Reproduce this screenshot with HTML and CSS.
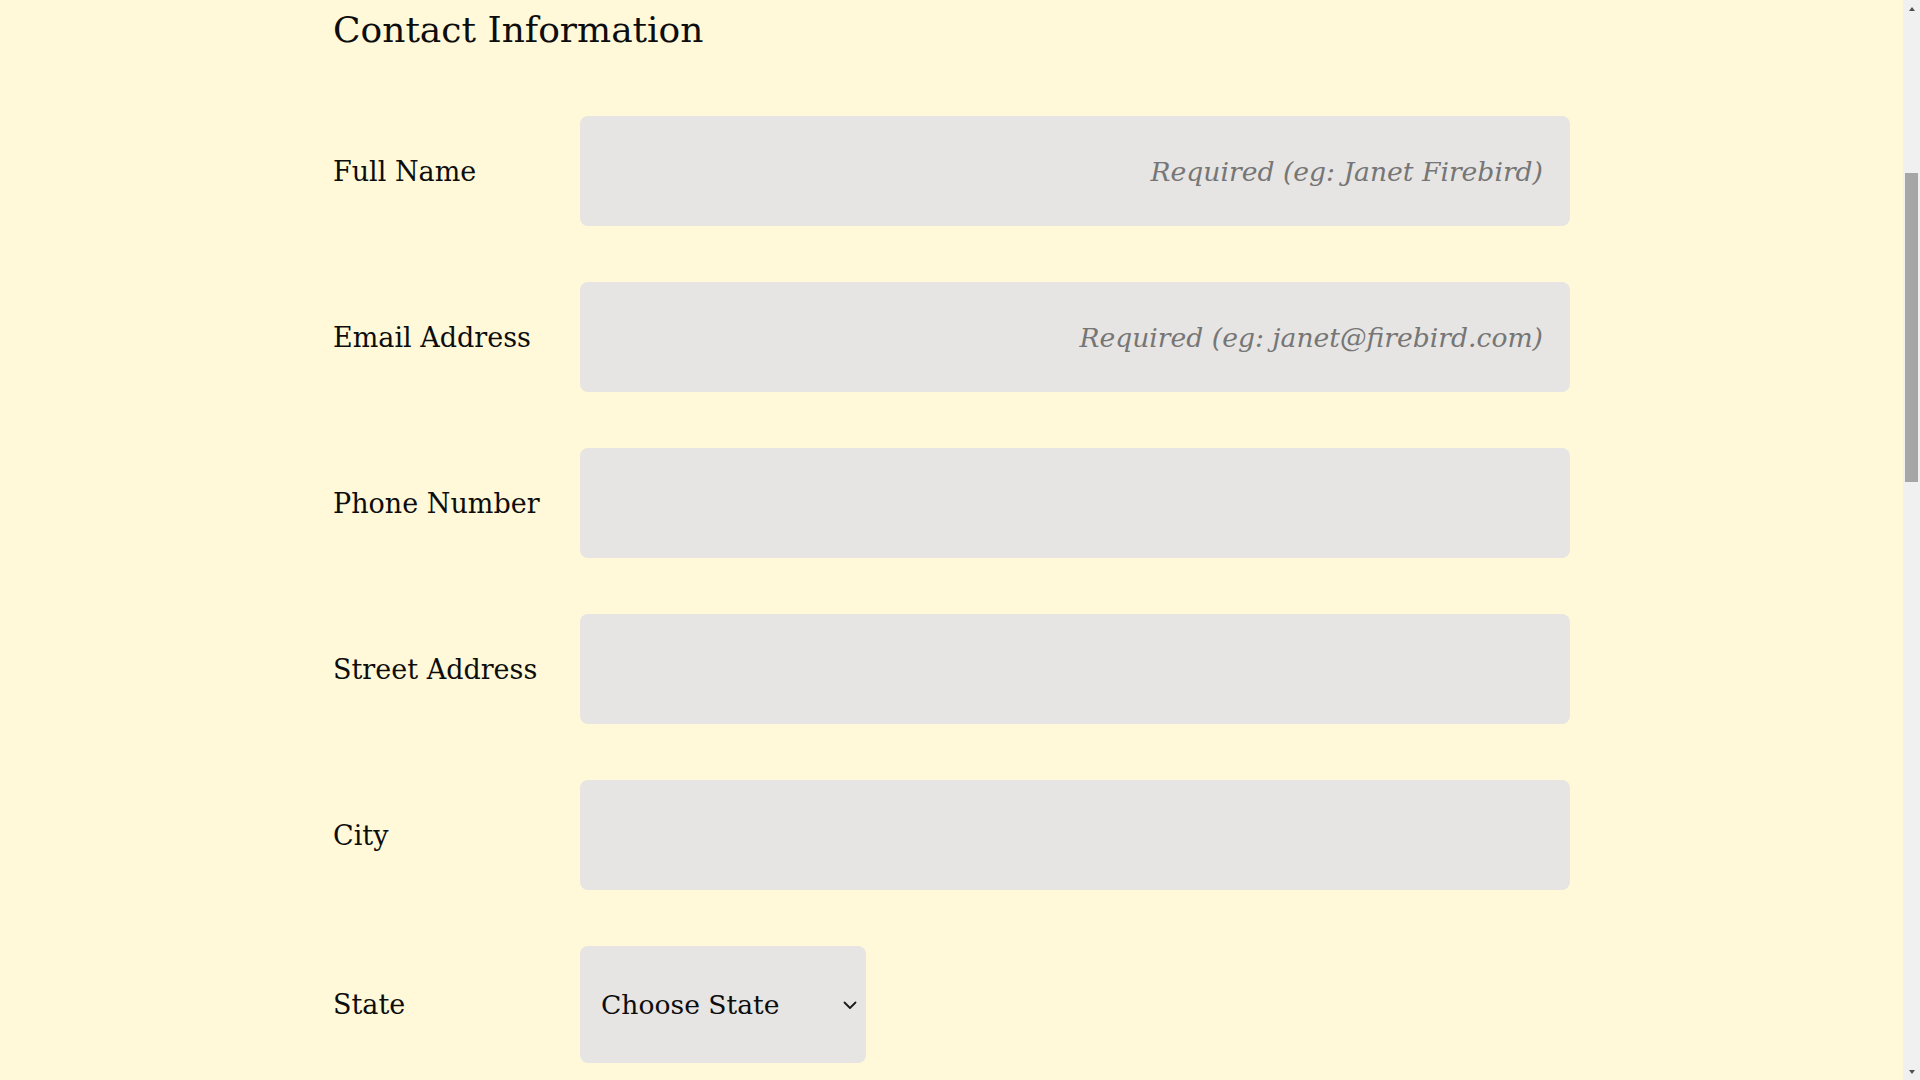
FILE: index.html
```html
<!DOCTYPE html>
<html lang="en">
<head>
<meta charset="utf-8">
<title>Contact Information</title>
<link rel="stylesheet" href="styles.css">
</head>
<body>
<main class="page">
  <form class="form">
    <section class="section">
      <h2 class="section-title">Contact Information</h2>
      <div class="fields">
        <label class="field-label" for="name">Full Name</label>
        <input class="field-input" id="name" type="text" placeholder="Required (eg: Janet Firebird)">

        <label class="field-label" for="email">Email Address</label>
        <input class="field-input" id="email" type="email" placeholder="Required (eg: janet@firebird.com)">

        <label class="field-label" for="phone">Phone Number</label>
        <input class="field-input" id="phone" type="tel">

        <label class="field-label" for="street">Street Address</label>
        <input class="field-input" id="street" type="text">

        <label class="field-label" for="city">City</label>
        <input class="field-input" id="city" type="text">

        <label class="field-label" for="state">State</label>
        <div class="select-wrap">
          <select class="field-select" id="state">
            <option>Choose State</option>
            <option>Alabama</option>
            <option>Alaska</option>
            <option>Arizona</option>
          </select>
          <svg class="select-chevron" width="14" height="9" viewBox="0 0 14 9" aria-hidden="true">
            <path d="M1.5 1.5 L7 7 L12.5 1.5" fill="none" stroke="#1a1a1a" stroke-width="1.8" stroke-linecap="round" stroke-linejoin="round"/>
          </svg>
        </div>
      </div>
    </section>
  </form>
</main>
<div class="scrollbar" aria-hidden="true">
  <span class="sb-button"><span class="sb-arrow sb-arrow-up"></span></span>
  <span class="sb-track"><span class="sb-thumb"></span></span>
  <span class="sb-button"><span class="sb-arrow sb-arrow-down"></span></span>
</div>
</body>
</html>
```

FILE: styles.css
```css
html, body {
  margin: 0;
  padding: 0;
}
body {
  background: #fff9d9;
  color: #0d0d0d;
  font-family: "DejaVu Serif", "Liberation Serif", serif;
  padding-right: 17px;
}
.page {
  width: 1237px;
  margin: 0 auto;
  padding-bottom: 400px;
}
.section-title {
  font-size: 36px;
  font-weight: normal;
  line-height: 43px;
  margin: 0;
  padding: 8px 0 65px;
}
.fields {
  display: grid;
  grid-template-columns: 247px 1fr;
  row-gap: 56px;
  align-items: center;
}
.field-label {
  font-size: 27px;
}
.field-input {
  box-sizing: border-box;
  height: 110px;
  width: 100%;
  border: none;
  border-radius: 8px;
  background: #e6e5e3;
  padding: 0 27px;
  font-family: inherit;
  font-size: 26.6px;
  text-align: right;
  color: #0d0d0d;
}
.field-input::placeholder {
  color: #767676;
  font-style: italic;
}
.select-wrap {
  position: relative;
  display: flex;
  width: 286px;
}
.field-select {
  box-sizing: border-box;
  appearance: none;
  -webkit-appearance: none;
  width: 286px;
  height: 117px;
  border: none;
  border-radius: 8px;
  background-color: #e6e5e3;
  padding: 0 40px 0 21px;
  font-family: inherit;
  font-size: 26.6px;
  color: #0d0d0d;
}
.select-chevron {
  position: absolute;
  right: 9px;
  top: 50%;
  margin-top: -4px;
  pointer-events: none;
}

/* window scrollbar (browser chrome in the reference) */
.scrollbar {
  position: fixed;
  top: 0;
  right: 0;
  width: 17px;
  height: 100vh;
  background: #f0f0f0;
  display: flex;
  flex-direction: column;
}
.sb-button {
  flex: 0 0 17px;
  display: flex;
  align-items: center;
  justify-content: center;
}
.sb-arrow {
  width: 0;
  height: 0;
  border-left: 3.5px solid transparent;
  border-right: 3.5px solid transparent;
}
.sb-arrow-up {
  border-bottom: 4px solid #505050;
}
.sb-arrow-down {
  border-top: 4px solid #505050;
}
.sb-track {
  flex: 1;
  display: flex;
  flex-direction: column;
  padding: 0 2px;
}
.sb-thumb {
  margin-top: 156px;
  height: 309px;
  background: #a6a6a6;
}
```
